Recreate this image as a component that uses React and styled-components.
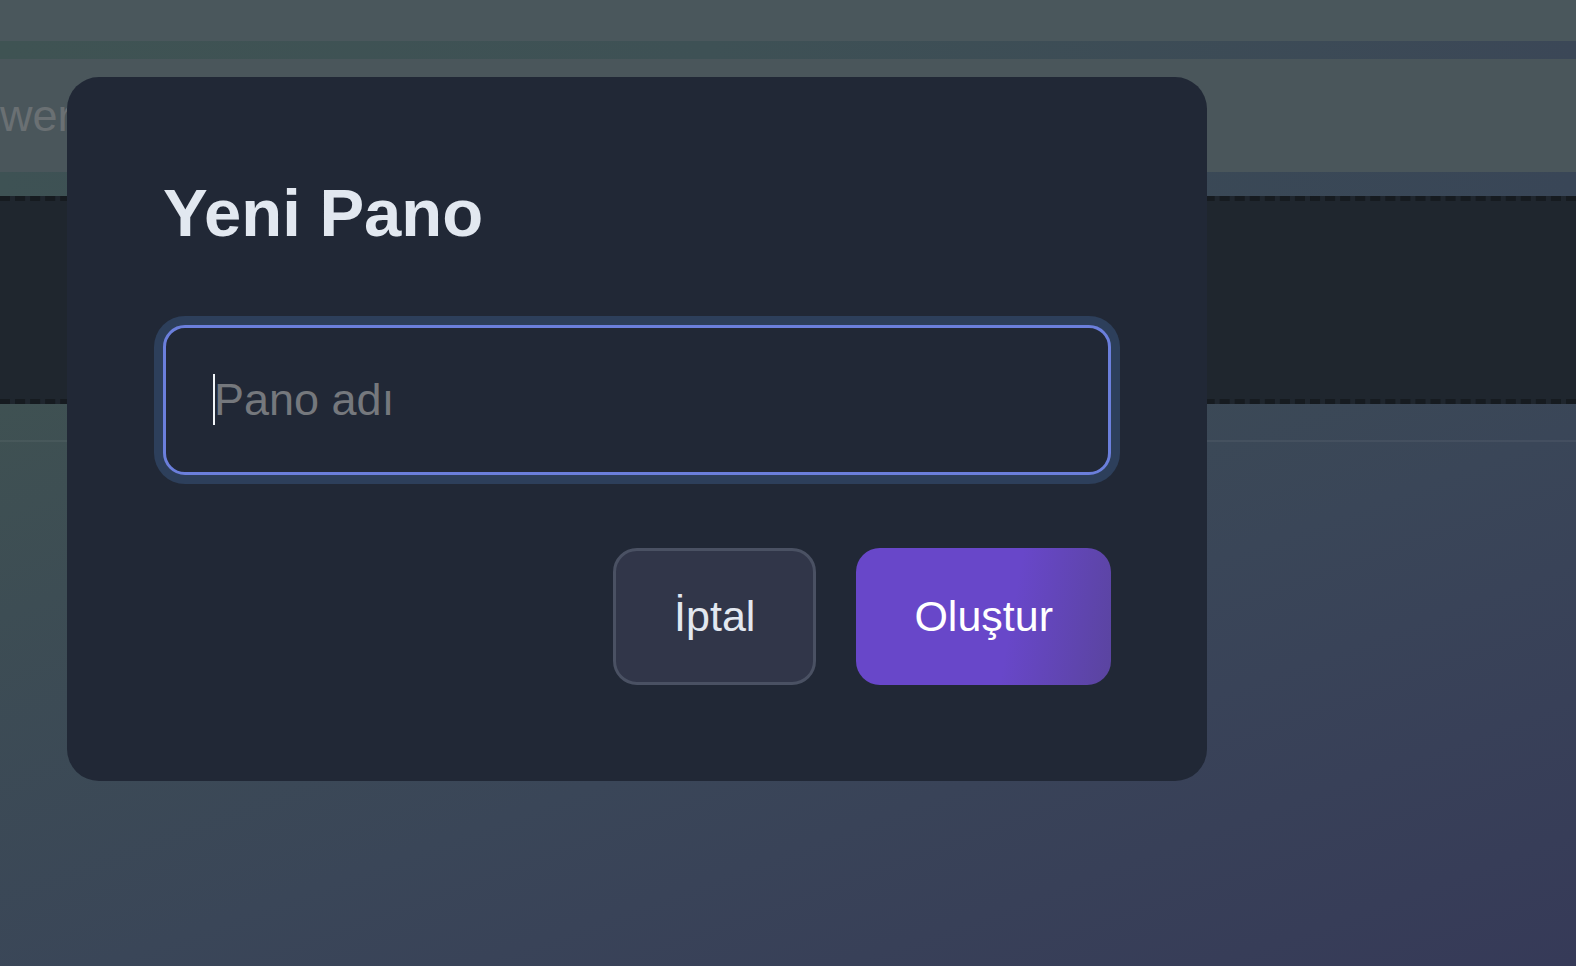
import React from 'react'
import styled, { createGlobalStyle } from 'styled-components'

const GlobalStyle = createGlobalStyle`
  html, body {
    margin: 0;
    padding: 0;
    height: 100%;
  }
  body {
    font-family: "Liberation Sans", Arial, sans-serif;
    overflow: hidden;
  }
  #root {
    height: 100%;
  }
`

const Page = styled.div`
  height: 100vh;
  display: flex;
  flex-direction: column;
  background: linear-gradient(160deg, #43594f 0%, #3d4d54 40%, #3a4658 65%, #363a58 100%);
`

const TopBar = styled.header`
  height: 41px;
  background: #4a575c;
`

const NavStrip = styled.div`
  height: 18px;
  background: linear-gradient(90deg, #3f5353 0%, #3e5155 45%, #3b4757 100%);
`

const SearchPanel = styled.div`
  height: 113px;
  background: #4a565b;
  display: flex;
  align-items: center;
  overflow: hidden;
`

const SearchText = styled.span`
  font-size: 45px;
  color: #6a7073;
  margin-left: -55px;
  white-space: nowrap;
`

const SubStrip = styled.div`
  height: 24px;
  background: linear-gradient(90deg, #3e5254 0%, #3b4b55 50%, #394657 100%);
`

const DropZone = styled.div`
  height: 198px;
  background: #1f262e;
  border-top: 5px dashed #161b20;
  border-bottom: 5px dashed #161b20;
`

const LowerStrip = styled.div`
  height: 36px;
  border-bottom: 2px solid rgba(255, 255, 255, 0.05);
`

const Overlay = styled.div`
  position: fixed;
  inset: 0;
  display: flex;
  align-items: flex-start;
  justify-content: flex-start;
  padding: 77px 0 0 67px;
`

const Modal = styled.div`
  width: 1140px;
  box-sizing: border-box;
  padding: 97px 96px 96px;
  background: #212836;
  border-radius: 32px;
  display: flex;
  flex-direction: column;
`

const Title = styled.h2`
  margin: 0;
  font-size: 67px;
  line-height: 77px;
  font-weight: 700;
  color: #e2e8f0;
`

const Field = styled.div`
  position: relative;
  margin-top: 74px;
`

const NameInput = styled.input`
  display: block;
  width: 100%;
  height: 150px;
  box-sizing: border-box;
  padding: 0 48px;
  font-family: "Liberation Sans", Arial, sans-serif;
  font-size: 45px;
  color: #e2e8f0;
  caret-color: transparent;
  background: #212836;
  border: 3px solid #6b7fdc;
  border-radius: 22px;
  box-shadow: 0 0 0 9px #2d3f5b;
  outline: none;

  &::placeholder {
    color: #75787d;
  }
`

const Caret = styled.span`
  position: absolute;
  left: 50px;
  top: 49px;
  width: 2px;
  height: 51px;
  background: #f1f5f9;
  pointer-events: none;
`

const Actions = styled.div`
  margin-top: 73px;
  display: flex;
  justify-content: flex-end;
  gap: 40px;
`

const Button = styled.button`
  height: 137px;
  box-sizing: border-box;
  padding: 0 58px;
  border-radius: 24px;
  font-family: "Liberation Sans", Arial, sans-serif;
  font-size: 43px;
  cursor: pointer;
  border: ${({ $primary }) => ($primary ? 'none' : '3px solid #4a5163')};
  color: ${({ $primary }) => ($primary ? '#ffffff' : '#e2e8f0')};
  background: ${({ $primary }) =>
    $primary
      ? 'linear-gradient(100deg, #6847c9 0%, #6847c9 60%, #5a449f 100%)'
      : '#313649'};
`

export default function App() {
  return (
    <>
      <GlobalStyle />
      <Page>
        <TopBar />
        <NavStrip />
        <SearchPanel>
          <SearchText>Power</SearchText>
        </SearchPanel>
        <SubStrip />
        <DropZone />
        <LowerStrip />
      </Page>
      <Overlay>
        <Modal>
          <Title>Yeni Pano</Title>
          <Field>
            <NameInput autoFocus placeholder="Pano adı" />
            <Caret />
          </Field>
          <Actions>
            <Button>İptal</Button>
            <Button $primary>Oluştur</Button>
          </Actions>
        </Modal>
      </Overlay>
    </>
  )
}
